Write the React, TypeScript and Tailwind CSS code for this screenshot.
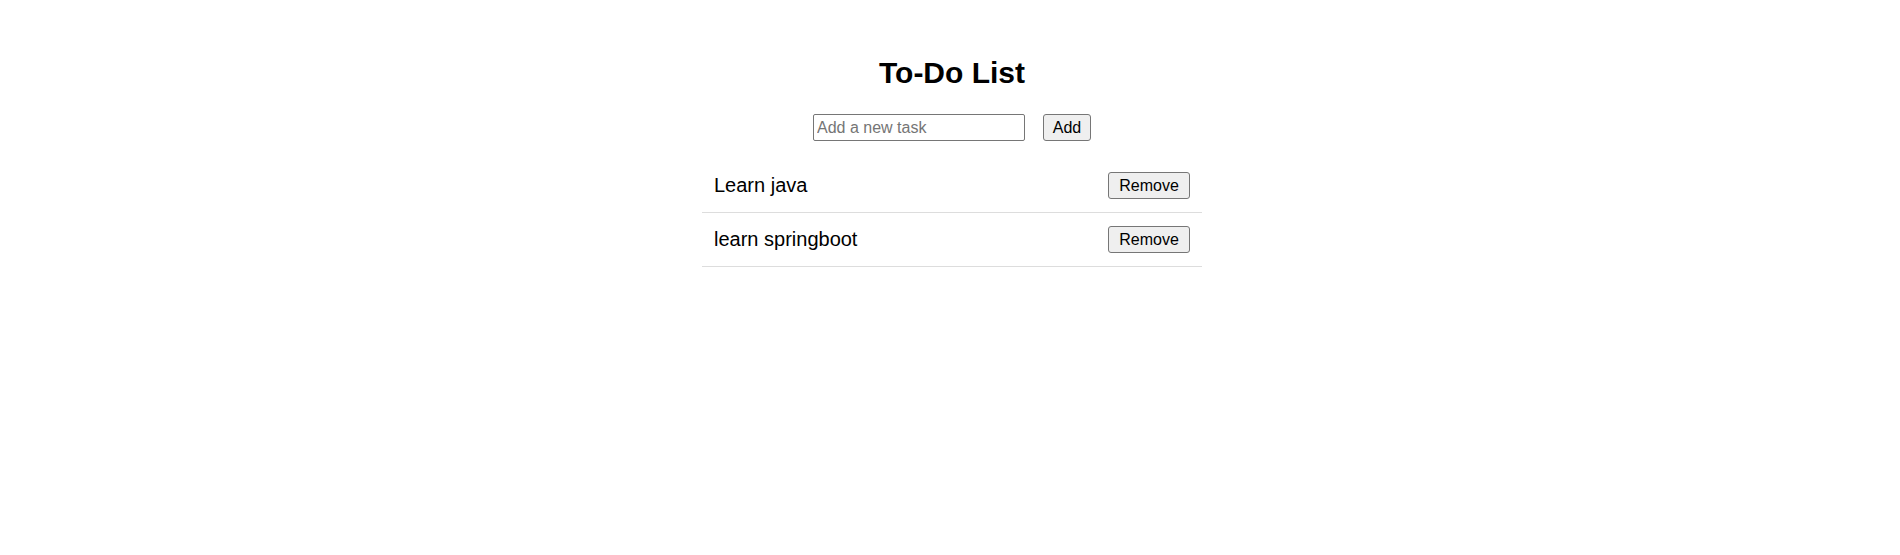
import { useState } from "react";

export default function App() {
  const [tasks, setTasks] = useState<string[]>(["Learn java", "learn springboot"]);
  const [text, setText] = useState("");

  const addTask = () => {
    if (!text.trim()) return;
    setTasks([...tasks, text.trim()]);
    setText("");
  };

  return (
    <div className="min-h-screen bg-white pl-[4px] font-['Liberation_Sans',Arial,sans-serif] text-black">
      <div className="mx-auto w-[500px] pt-[55px]">
        {/* Title */}
        <h1 className="text-center text-[30px] leading-[36px] font-bold">To-Do List</h1>

        {/* Input row */}
        <div className="mt-[23px] flex items-center justify-center gap-[18px]">
          <input
            value={text}
            onChange={(e) => setText(e.target.value)}
            placeholder="Add a new task"
            className="h-[27px] w-[212px] rounded-[2px] border border-[#767676] px-[3px] text-[16px] leading-[19px] placeholder:text-[#757575] outline-none"
          />
          <button
            onClick={addTask}
            className="h-[27px] w-[48px] rounded-[3px] border border-[#767676] bg-[#efefef] text-[16px] leading-[19px]"
          >
            Add
          </button>
        </div>

        {/* Task list */}
        <ul className="mt-[18px]">
          {tasks.map((task, i) => (
            <li
              key={i}
              className="flex items-center justify-between border-b border-[#dddddd] px-3 py-[13px]"
            >
              <span className="text-[20px] leading-[23px]">{task}</span>
              <button
                onClick={() => setTasks(tasks.filter((_, j) => j !== i))}
                className="h-[27px] w-[82px] rounded-[3px] border border-[#767676] bg-[#efefef] text-[16px] leading-[19px]"
              >
                Remove
              </button>
            </li>
          ))}
        </ul>
      </div>
    </div>
  );
}
